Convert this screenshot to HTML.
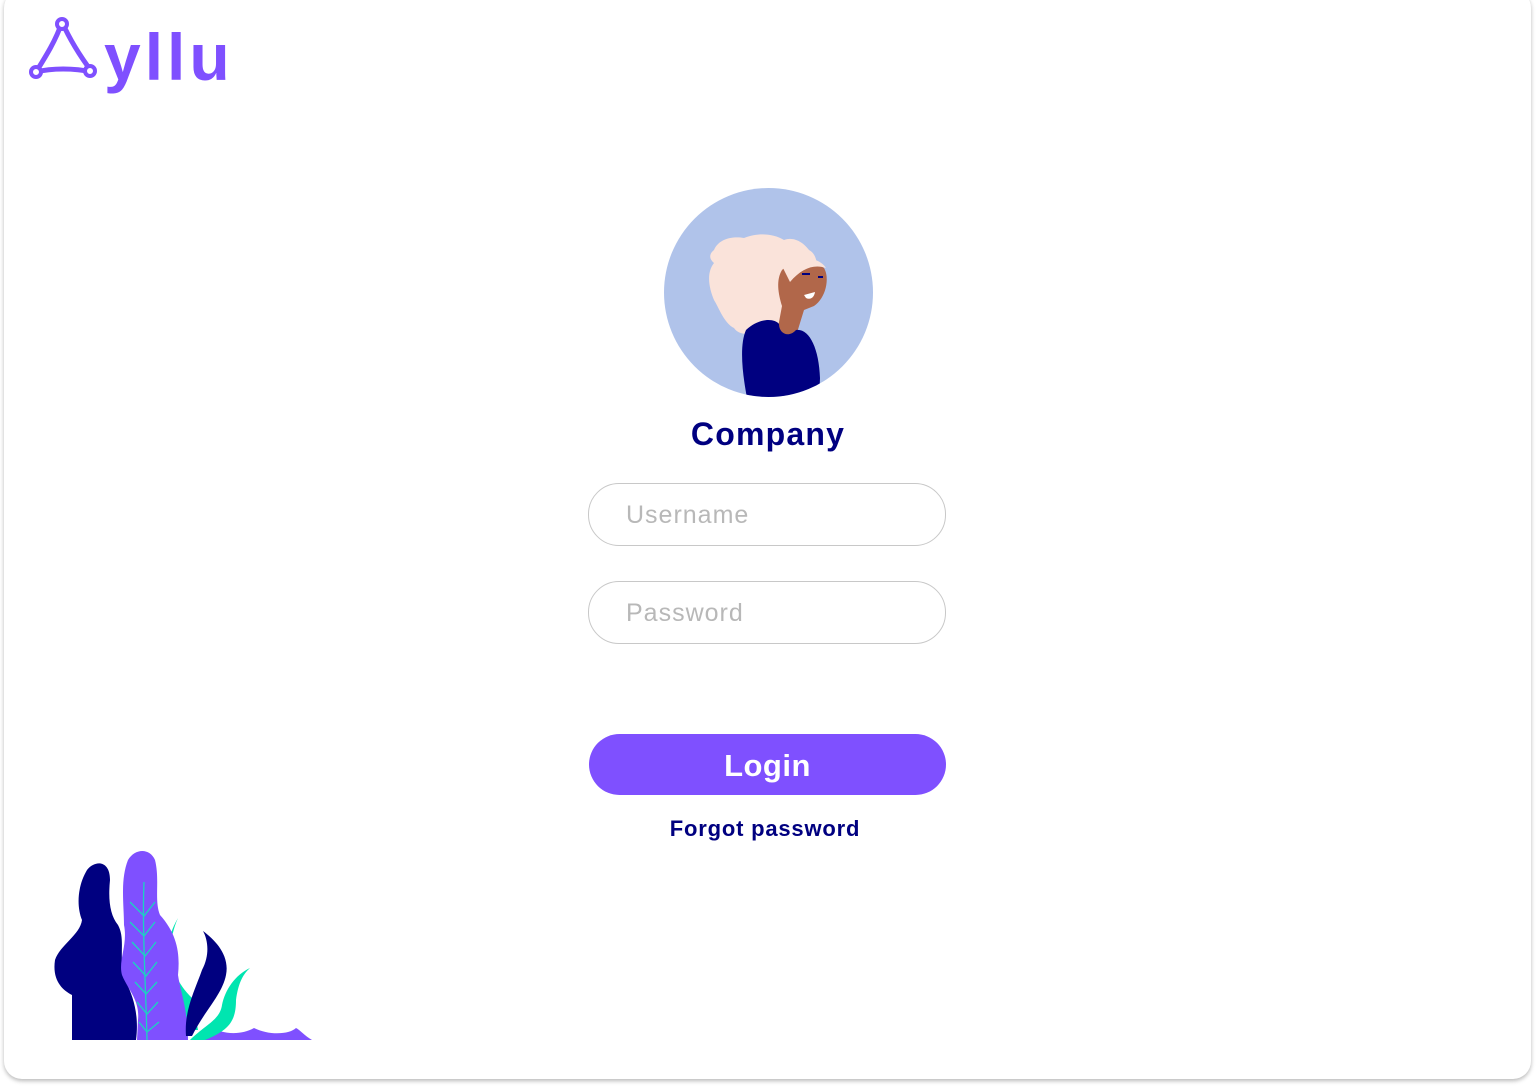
<!DOCTYPE html>
<html><head><style>
html,body{margin:0;padding:0;background:#fff;}
body{width:1536px;height:1088px;position:relative;overflow:hidden;font-family:"Liberation Sans",sans-serif;}
.card{position:absolute;left:4px;top:-10px;width:1527px;height:1089px;border-radius:18px;background:#fff;box-shadow:0 2px 4px rgba(0,0,0,0.28);}
.logo{position:absolute;left:28px;top:16px;}
.logo span{position:absolute;left:76px;top:8px;font-size:66px;font-weight:bold;color:#7f50ff;letter-spacing:4px;line-height:66px;}
.avatar{position:absolute;left:664px;top:188px;}
.company{position:absolute;left:0;width:1536px;top:416px;text-align:center;font-size:32px;font-weight:bold;color:#000080;letter-spacing:1.2px;}
.inp{position:absolute;left:588px;width:358px;height:63px;border:1px solid #c8c8c8;border-radius:31px;box-sizing:border-box;font-size:25px;color:#b8b8b8;padding-left:37px;line-height:63px;letter-spacing:1px;}
.btn{position:absolute;left:589px;top:734px;width:357px;height:61px;border-radius:31px;background:#7f50ff;color:#fff;font-weight:bold;font-size:31px;text-align:center;line-height:63px;letter-spacing:0.5px;}
.forgot{position:absolute;left:0;width:1530px;top:816px;text-align:center;font-size:22px;font-weight:bold;color:#000080;letter-spacing:0.8px;}
</style></head><body>
<div class="card"></div>
<div class="logo">
<svg width="72" height="64" viewBox="0 0 72 64">
<path d="M34 6 C28 24 18 40 8 56 C24 52 46 52 64 56 C52 40 42 24 34 6 Z" fill="none" stroke="#7f50ff" stroke-width="5" stroke-linejoin="round"/>
<circle cx="34" cy="8" r="5" fill="#fff" stroke="#7f50ff" stroke-width="4"/>
<circle cx="8" cy="56" r="5" fill="#fff" stroke="#7f50ff" stroke-width="4"/>
<circle cx="62" cy="55" r="5" fill="#fff" stroke="#7f50ff" stroke-width="4"/>
</svg>
<span>yllu</span>
</div>
<svg class="avatar" width="210" height="210" viewBox="0 0 210 210">
<defs><clipPath id="c"><circle cx="104.5" cy="104.5" r="104.5"/></clipPath></defs>
<circle cx="104.5" cy="104.5" r="104.5" fill="#b0c3ea"/>
<g clip-path="url(#c)">
<path d="M50 62 C55 50 70 48 80 50 C95 44 110 46 120 52 C130 48 140 55 145 62 C160 70 150 100 145 110 C140 130 120 140 100 140 C90 148 75 148 70 140 C60 135 55 120 50 112 C45 100 42 85 50 75 C44 70 46 65 50 62Z" fill="#fae3da"/>
<path d="M118 82 C130 70 150 72 160 80 C166 90 162 110 150 118 L140 122 L132 148 L112 150 L118 118 C114 105 112 92 118 82Z" fill="#b1674a"/>
<path d="M118 78 C130 66 155 68 162 80 C150 76 138 80 126 94 Z" fill="#fae3da"/>
<path d="M82 142 C95 130 110 130 115 136 C115 146 125 150 132 142 C145 140 155 160 156 190 L155 215 L84 215 C80 195 74 160 82 142Z" fill="#000080"/>
<path d="M140 107 L151 104 C150 110 146 112 142 110Z" fill="#fff"/>
<rect x="138" y="85" width="8" height="2" fill="#000080"/><rect x="154" y="88" width="5" height="2" fill="#000080"/>
</g>
</svg>
<div class="company">Company</div>
<div class="inp" style="top:483px">Username</div>
<div class="inp" style="top:581px">Password</div>
<div class="btn">Login</div>
<div class="forgot">Forgot password</div>
<svg style="position:absolute;left:0;top:840px" width="330" height="210" viewBox="0 840 330 210">
<path d="M190 1040 L312 1040 C305 1036 300 1030 296 1028 C290 1034 270 1036 254 1028 C240 1036 220 1034 210 1026 Z" fill="#7f50ff"/>
<path d="M178 918 C166 945 168 975 192 998 L198 1030 L186 1030 C178 1005 160 985 166 955 C168 940 172 928 178 918 Z" fill="#00e5b0"/>
<path d="M72 1040 L136 1040 C140 1010 130 990 125 980 C118 955 126 940 118 925 C110 915 108 900 110 880 C110 860 95 860 87 870 C78 885 76 905 82 920 C80 935 60 945 55 960 C52 980 62 990 72 995 Z" fill="#000080"/>
<path d="M137 1040 L188 1040 C188 1010 180 990 178 975 C180 955 178 935 160 915 C154 900 160 880 155 860 C150 848 135 848 128 860 C120 880 124 905 124 925 C128 945 118 960 122 975 C128 990 140 1000 138 1020 Z" fill="#7f50ff"/>
<g stroke="#1ad4c0" stroke-width="1.3" fill="none">
<path d="M144 882 C142 930 146 990 147 1040"/>
<path d="M130 902 L144 916 L155 902 M130 922 L144 936 L155 922 M132 942 L145 956 L156 942 M133 962 L146 976 L157 962 M135 982 L146 994 L157 982 M137 1002 L147 1014 L158 1002 M139 1022 L147 1032 L159 1022"/>
</g>
<path d="M203 931 C215 940 230 955 226 975 C222 995 205 1010 192 1036 L186 1036 C184 1010 195 990 202 970 C210 955 208 940 203 931 Z" fill="#000080"/>
<path d="M250 968 C235 975 225 990 222 1005 C220 1020 205 1025 190 1040 L205 1040 C230 1030 236 1020 236 1000 C238 985 242 975 250 968 Z" fill="#00e5b0"/>
</svg>
</body></html>
